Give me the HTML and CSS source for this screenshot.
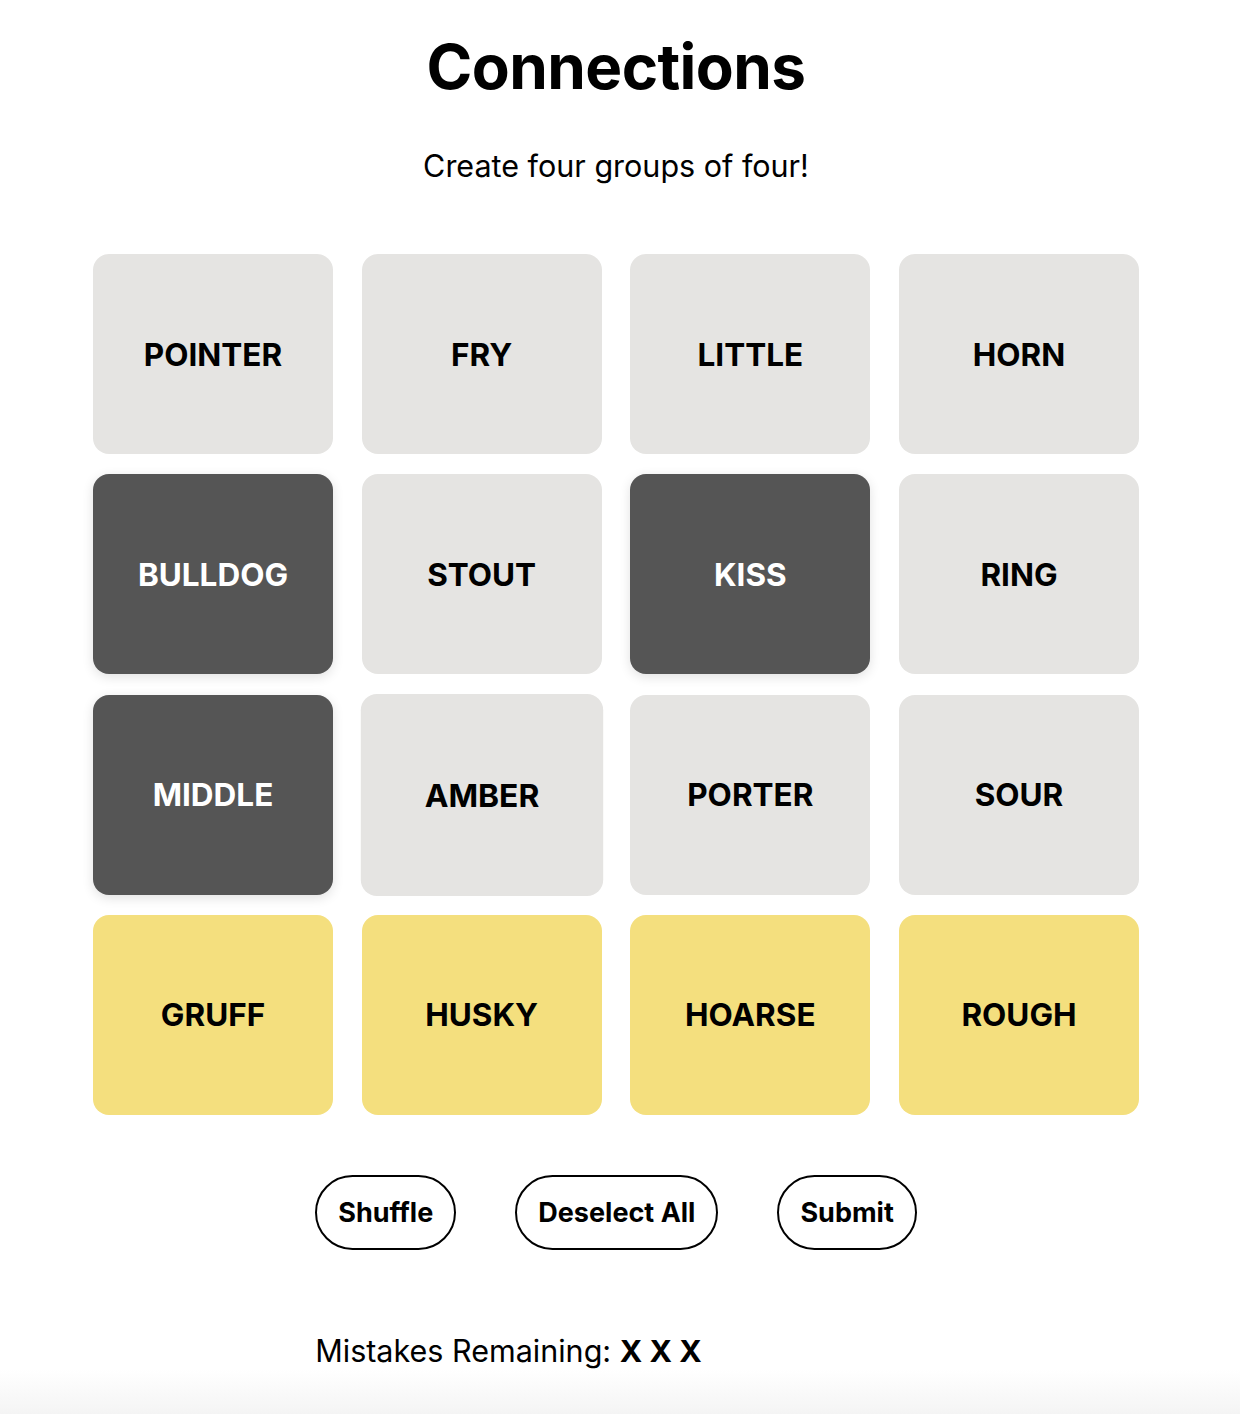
FILE: index.html
```html
<!DOCTYPE html>
<html lang="en">
<head>
<meta charset="utf-8">
<title>Connections</title>
<link rel="stylesheet" href="styles.css">
</head>
<body>
<main class="page">
  <h1 class="title">Connections</h1>
  <p class="subtitle">Create four groups of four!</p>
  <div class="board">
    <div class="tile">POINTER</div>
    <div class="tile">FRY</div>
    <div class="tile">LITTLE</div>
    <div class="tile">HORN</div>
    <div class="tile tile-selected">BULLDOG</div>
    <div class="tile">STOUT</div>
    <div class="tile tile-selected">KISS</div>
    <div class="tile">RING</div>
    <div class="tile tile-selected">MIDDLE</div>
    <div class="tile tile-hover">AMBER</div>
    <div class="tile">PORTER</div>
    <div class="tile">SOUR</div>
    <div class="tile tile-solved">GRUFF</div>
    <div class="tile tile-solved">HUSKY</div>
    <div class="tile tile-solved">HOARSE</div>
    <div class="tile tile-solved">ROUGH</div>
  </div>
  <div class="controls">
    <div class="actions">
      <button class="btn">Shuffle</button>
      <button class="btn">Deselect All</button>
      <button class="btn">Submit</button>
    </div>
    <p class="mistakes">Mistakes Remaining: <strong>X X X</strong></p>
  </div>
  <div class="fade"></div>
</main>
</body>
</html>
```

FILE: styles.css
```css
html, body {
  margin: 0;
  padding: 0;
  background: #ffffff;
}

body {
  font-family: Inter, "Noto Sans", "Liberation Sans", sans-serif;
  color: #000;
}

.page {
  width: 1232px;
  display: flex;
  flex-direction: column;
  align-items: center;
}

.title {
  margin: 29px 0 0;
  font-size: 62px;
  line-height: 76px;
  font-weight: 700;
  letter-spacing: -0.6px;
}

.subtitle {
  margin: 43px 0 0;
  font-size: 30.5px;
  line-height: 36px;
  font-weight: 400;
}

.board {
  margin-top: 70px;
  width: 1046px;
  display: grid;
  grid-template-columns: repeat(4, 240px);
  grid-auto-rows: 200px;
  column-gap: 28.67px;
  row-gap: 20.33px;
}

.tile {
  display: flex;
  align-items: center;
  justify-content: center;
  border-radius: 16px;
  background: #e5e4e2;
  font-size: 31.5px;
  font-weight: 700;
  color: #000;
}

.tile-selected {
  background: #555555;
  color: #fff;
  box-shadow: 0 3px 12px rgba(0, 0, 0, 0.12);
}

.tile-hover {
  transform: scale(1.01);
}

.tile-solved {
  background: #f4df7e;
}

.controls {
  margin-top: 60px;
  display: flex;
  flex-direction: column;
  align-items: flex-start;
}

.actions {
  display: flex;
  gap: 59px;
}

.btn {
  height: 75px;
  padding: 0 21px;
  border: 2px solid #000;
  border-radius: 40px;
  background: #fff;
  font-family: inherit;
  font-size: 27px;
  font-weight: 700;
  color: #000;
}

.mistakes {
  margin: 83px 0 0;
  font-size: 30.5px;
  line-height: 36px;
}

.mistakes strong {
  font-weight: 700;
}

.fade {
  align-self: stretch;
  width: 1240px;
  height: 46px;
  margin-top: 0;
  background: linear-gradient(#ffffff, #f4f4f4);
}
```
